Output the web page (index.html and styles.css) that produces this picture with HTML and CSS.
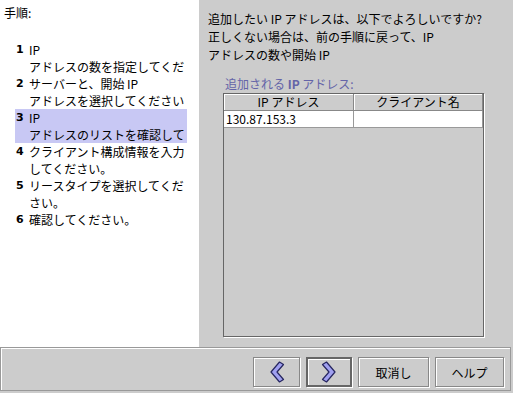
FILE: index.html
```html
<!DOCTYPE html>
<html lang="ja">
<head>
  <meta charset="UTF-8" />
  <title>IP アドレスの追加</title>
  <link rel="stylesheet" href="styles.css">
</head>
<body>
  <div class="wizard">
    <div class="main">
      <!-- Steps -->
      <div class="steps">
        <div class="steps-title">手順:</div>
        <ol class="step-list">
          <li class="step"><span class="num">1</span><span class="txt">IP<br>アドレスの数を指定してくだ</span></li>
          <li class="step"><span class="num">2</span><span class="txt">サーバーと、開始 IP<br>アドレスを選択してください</span></li>
          <li class="step current"><span class="num">3</span><span class="txt">IP<br>アドレスのリストを確認して</span></li>
          <li class="step"><span class="num">4</span><span class="txt">クライアント構成情報を入力<br>してください。</span></li>
          <li class="step"><span class="num">5</span><span class="txt">リースタイプを選択してくだ<br>さい。</span></li>
          <li class="step"><span class="num">6</span><span class="txt">確認してください。</span></li>
        </ol>
      </div>

      <!-- Content -->
      <div class="content">
        <p class="intro">追加したい IP アドレスは、以下でよろしいですか?<br>正しくない場合は、前の手順に戻って、IP<br>アドレスの数や開始 IP</p>
        <div class="list-label">追加される <b>IP</b> アドレス:</div>
        <div class="table-box">
          <table class="ip-table">
            <thead>
              <tr><th class="col-ip">IP アドレス</th><th>クライアント名</th></tr>
            </thead>
            <tbody>
              <tr><td>130.87.153.3</td><td></td></tr>
            </tbody>
          </table>
        </div>
      </div>
    </div>

    <!-- Buttons -->
    <div class="footer">
      <div class="footer-inner">
        <button class="button nav">
          <svg width="16" height="22" viewBox="0 0 16 22"><polygon points="10.5,1 14.5,3.5 8,11 14.5,18.5 10.5,21 2,11" fill="#a0a0f0" stroke="#262660" stroke-width="1.2" stroke-linejoin="round"/></svg>
        </button>
        <button class="button nav default">
          <svg width="16" height="22" viewBox="0 0 16 22"><polygon points="5.5,1 1.5,3.5 8,11 1.5,18.5 5.5,21 14,11" fill="#a0a0f0" stroke="#262660" stroke-width="1.2" stroke-linejoin="round"/></svg>
        </button>
        <button class="button text">取消し</button>
        <button class="button text help">ヘルプ</button>
      </div>
    </div>
  </div>
</body>
</html>
```

FILE: styles.css
```css
body {
  margin: 0;
  font-family: "Noto Sans CJK JP", "DejaVu Sans", sans-serif;
  font-size: 12px;
  color: #000;
  background: #cccccc;
}
.wizard {
  width: 513px;
  height: 393px;
  display: flex;
  flex-direction: column;
  overflow: hidden;
}
.main {
  display: flex;
  height: 347px;
}
.steps {
  width: 199px;
  background: #fff;
  padding: 4px 0 0 4px;
  box-sizing: border-box;
  line-height: 17px;
}
.steps-title {
  margin-bottom: 20px;
}
.step-list {
  list-style: none;
  margin: 0;
  padding: 0;
}
.step {
  display: flex;
  width: 172px;
  margin-left: 11px;
  white-space: nowrap;
  overflow: hidden;
}
.step.current {
  background: #c8c8f4;
}
.num {
  width: 13px;
  flex: none;
  font-family: "DejaVu Sans", sans-serif;
  font-weight: bold;
  font-size: 11px;
  padding-left: 1px;
}
.content {
  flex: 1;
  background: #cccccc;
  padding: 10px 0 0 9px;
}
.intro {
  margin: 0;
  line-height: 18px;
}
.list-label {
  color: #6464a8;
  margin: 12px 0 0 17px;
  line-height: 16px;
}
.table-box {
  margin: 1px 0 0 15px;
  width: 259px;
  height: 242px;
  border: 1px solid #666;
  box-shadow: 1px 1px 0 #fff;
  background: #cccccc;
}
.ip-table {
  width: 100%;
  border-collapse: collapse;
  table-layout: fixed;
}
.ip-table th {
  height: 16px;
  padding: 0;
  font-weight: normal;
  background: #cccccc;
  border-right: 1px solid #888;
  border-bottom: 1px solid #888;
  box-shadow: inset 1px 1px 0 #fff;
  line-height: 16px;
}
.ip-table .col-ip {
  width: 129px;
}
.ip-table td {
  height: 16px;
  padding: 0 0 0 2px;
  background: #fff;
  border-right: 1px solid #999;
  border-bottom: 1px solid #999;
  line-height: 16px;
}
.footer {
  height: 46px;
  background: #cccccc;
}
.footer-inner {
  width: 511px;
  height: 44px;
  box-sizing: border-box;
  border: 1px solid #999;
  box-shadow: inset 1px 1px 0 #fff;
  display: flex;
  justify-content: flex-end;
  align-items: center;
  padding: 0 6px 2px 0;
  gap: 6px;
}
.button {
  height: 30px;
  background: #cccccc;
  border: 1px solid #888;
  box-shadow: inset 1px 1px 0 #fff, 1px 1px 0 #fff;
  font-family: inherit;
  font-size: 12px;
  padding: 0;
  display: flex;
  align-items: center;
  justify-content: center;
  margin-top: 8px;
}
.button.nav {
  width: 47px;
}
.button.default {
  width: 46px;
  border: 2px solid #666;
}
.button.text {
  width: 71px;
}
.button.help {
  width: 69px;
}
```
